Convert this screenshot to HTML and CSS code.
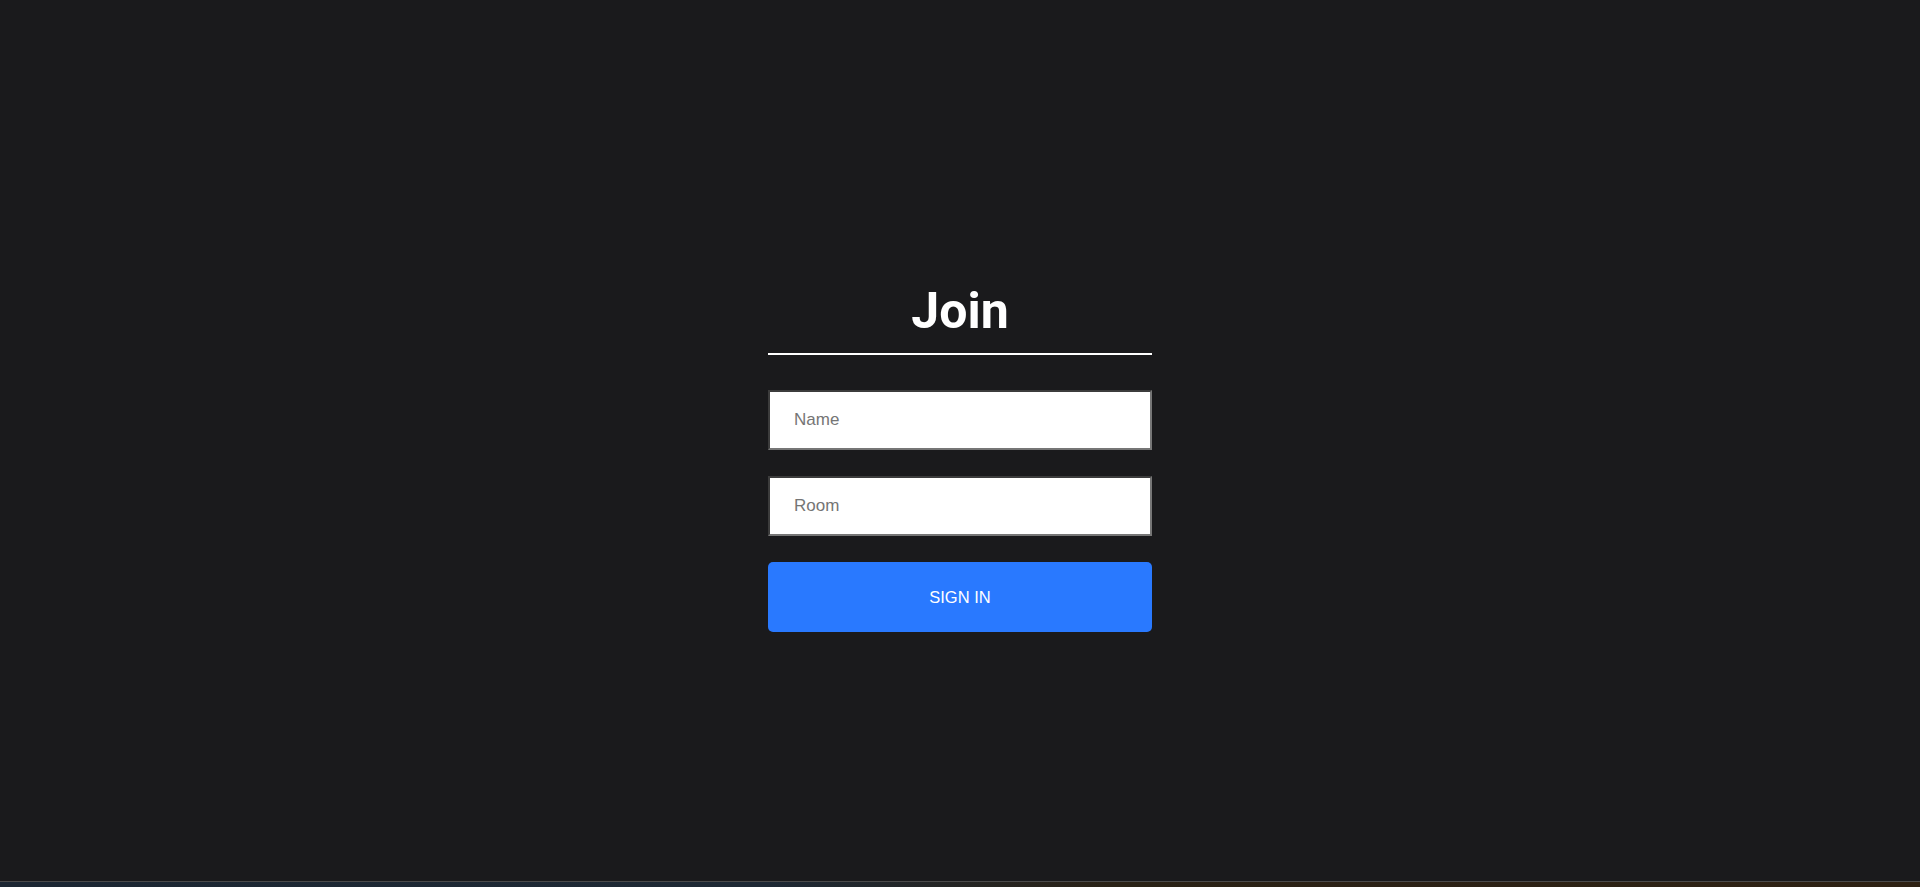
FILE: index.html
```html
<!DOCTYPE html>
<html lang="en">
<head>
<meta charset="utf-8">
<title>Join</title>
<link rel="stylesheet" href="styles.css">
</head>
<body>
<div class="page">
  <main class="outer">
    <div class="inner">
      <h1 class="heading">Join</h1>
      <div class="field"><input class="join-input" type="text" placeholder="Name"></div>
      <div class="field"><input class="join-input" type="text" placeholder="Room"></div>
      <button class="button" type="submit">Sign In</button>
    </div>
  </main>
  <div class="taskbar"></div>
</div>
</body>
</html>
```

FILE: styles.css
```css
html, body {
  margin: 0;
  padding: 0;
  height: 100%;
  background: #1a1a1c;
}
.page {
  height: 100vh;
  display: flex;
  flex-direction: column;
}
.outer {
  flex: 1;
  display: flex;
  justify-content: center;
  align-items: center;
  padding-top: 32px;
  background: #1a1a1c;
}
.inner {
  width: 384px;
}
.heading {
  margin: 0;
  color: #ffffff;
  font-family: Roboto, "Liberation Sans", sans-serif;
  font-weight: 700;
  font-size: 50px;
  line-height: 61px;
  text-align: center;
  padding-bottom: 11px;
  border-bottom: 2px solid #ffffff;
}
.field {
  margin-top: 35px;
}
.field + .field {
  margin-top: 26px;
}
.join-input {
  display: block;
  box-sizing: border-box;
  width: 100%;
  height: 60px;
  margin: 0;
  padding: 0 24px;
  border: 2px solid;
  border-color: #3c3c3c #767676 #767676 #3c3c3c;
  background: #ffffff;
  font-family: "Liberation Sans", Arial, sans-serif;
  font-size: 17px;
  color: #333333;
  outline: none;
}
.join-input::placeholder {
  color: #757575;
}
.button {
  display: block;
  box-sizing: border-box;
  width: 100%;
  height: 70px;
  margin-top: 26px;
  border: none;
  border-radius: 5px;
  background: #2979ff;
  color: #ffffff;
  font-family: "Liberation Sans", Arial, sans-serif;
  font-size: 16.5px;
  text-transform: uppercase;
  cursor: pointer;
}
.taskbar {
  height: 5px;
  border-top: 1px solid #4a4a4a;
  background: linear-gradient(90deg, #1c2733 0%, #1d2834 40%, #2a2216 58%, #2e2113 100%);
}
```
